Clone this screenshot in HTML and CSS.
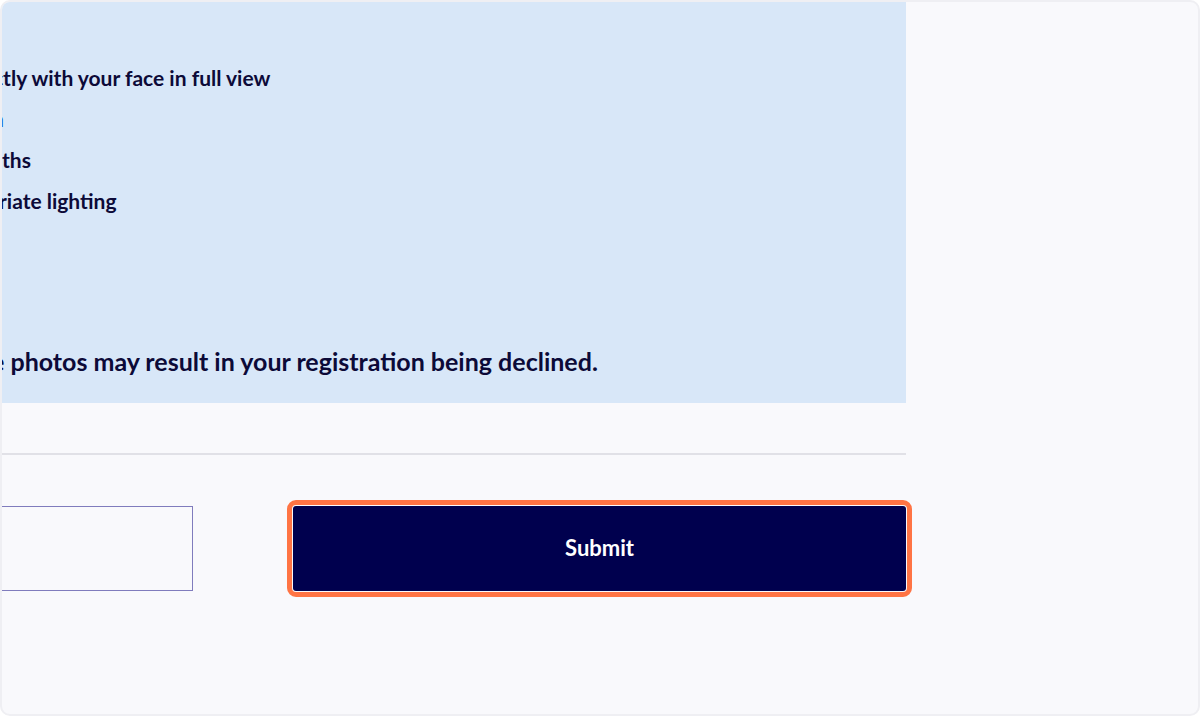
FILE: index.html
```html
<!DOCTYPE html>
<html lang="en">
<head>
<meta charset="utf-8">
<title>Photo upload</title>
<link rel="stylesheet" href="styles.css">
</head>
<body>
<div class="frame">
  <div class="content">
    <section class="notice">
      <ul class="rules">
        <li class="rule rule-1">ctly with your face in full view</li>
        <li class="rule rule-2"><a class="link" href="#">n</a></li>
        <li class="rule rule-3">ths</li>
        <li class="rule rule-4">riate lighting</li>
      </ul>
      <p class="warning">e photos may result in your registration being declined.</p>
    </section>
    <hr class="divider">
    <div class="actions">
      <button class="btn btn-secondary" type="button">Back</button>
      <button class="btn btn-primary" type="submit">Submit</button>
    </div>
  </div>
</div>
</body>
</html>
```
FILE: styles.css
```css
* { box-sizing: border-box; }

html, body {
  margin: 0;
  padding: 0;
  background: #ffffff;
}

body {
  font-family: Lato, "Open Sans", "Liberation Sans", sans-serif;
  color: #0c0a38;
}

.frame {
  width: 1200px;
  height: 716px;
  border: 2px solid #efeff3;
  border-radius: 10px;
  background: #f9f9fc;
  overflow: hidden;
}

.content {
  width: 904px;
  display: flex;
  flex-direction: column;
}

.notice {
  background: #d8e7f8;
  height: 401px;
  padding-top: 55px;
  border-top-left-radius: 6px;
}

.rules {
  list-style: none;
  margin: 0;
  padding: 0;
}

.rule {
  font-size: 21px;
  font-weight: 700;
  line-height: 41px;
  height: 41px;
  white-space: nowrap;
}

.rule-1 { margin-left: -9px; }
.rule-2 { margin-left: -10px; }
.rule-3 { margin-left: 0; }
.rule-4 { margin-left: -3px; }

.link {
  color: #1d5fd6;
  text-decoration: none;
}

.warning {
  margin: 125px 0 0 -11px;
  font-size: 25px;
  font-weight: 700;
  line-height: 30px;
  white-space: nowrap;
}

.divider {
  margin: 50px 0 0;
  border: 0;
  height: 2px;
  background: #e1e1e7;
}

.actions {
  display: flex;
  justify-content: flex-end;
  gap: 100px;
  margin-top: 51px;
}

.btn {
  flex: 0 0 613px;
  height: 85px;
  font-family: Lato, "Open Sans", "Liberation Sans", sans-serif;
  font-size: 22px;
  font-weight: 700;
  line-height: 1;
  cursor: pointer;
}

.btn-secondary {
  background: transparent;
  border: 1.5px solid #807cbd;
  color: transparent;
}

.btn-primary {
  background: #00004e;
  color: #ffffff;
  border: 0;
  border-radius: 3px;
  outline: 5px solid #ff7444;
  outline-offset: 1px;
  padding-bottom: 2px;
}
```
